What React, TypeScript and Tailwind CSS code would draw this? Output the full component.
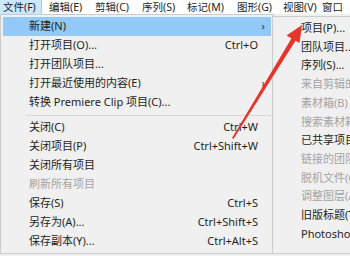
import React from 'react';

type Item = { label: string; shortcut?: string; disabled?: boolean; sub?: boolean; active?: boolean; sep?: boolean };

const menuBar = [
  { label: '文件(F)', w: 'w-[42px] mr-[4px]' },
  { label: '编辑(E)', w: 'w-[46px]' },
  { label: '剪辑(C)', w: 'w-[47px]' },
  { label: '序列(S)', w: 'w-[45px]' },
  { label: '标记(M)', w: 'w-[50px]' },
  { label: '图形(G)', w: 'w-[46px]' },
  { label: '视图(V)', w: 'w-[39px]' },
  { label: '窗口', w: 'w-[40px]' },
];

const fileItems: Item[] = [
  { label: '新建(N)', sub: true, active: true },
  { label: '打开项目(O)...', shortcut: 'Ctrl+O' },
  { label: '打开团队项目...' },
  { label: '打开最近使用的内容(E)', sub: true },
  { label: '转换 Premiere Clip 项目(C)...' },
  { label: '', sep: true },
  { label: '关闭(C)', shortcut: 'Ctrl+W' },
  { label: '关闭项目(P)', shortcut: 'Ctrl+Shift+W' },
  { label: '关闭所有项目' },
  { label: '刷新所有项目', disabled: true },
  { label: '保存(S)', shortcut: 'Ctrl+S' },
  { label: '另存为(A)...', shortcut: 'Ctrl+Shift+S' },
  { label: '保存副本(Y)...', shortcut: 'Ctrl+Alt+S' },
];

const newItems: Item[] = [
  { label: '项目(P)...' },
  { label: '团队项目...' },
  { label: '序列(S)...' },
  { label: '来自剪辑的序列', disabled: true },
  { label: '素材箱(B)', disabled: true },
  { label: '搜索素材箱', disabled: true },
  { label: '已共享项目...' },
  { label: '链接的团队项目...', disabled: true },
  { label: '脱机文件(O)...', disabled: true },
  { label: '调整图层(A)...', disabled: true },
  { label: '旧版标题(T)...' },
  { label: 'Photoshop 文件(H)...' },
];

export default function App() {
  return (
    <div
      className="relative w-[350px] h-[256px] overflow-hidden bg-[#f0f0f0] text-[11px] text-[#1e1e1e]"
      style={{ fontFamily: '"Noto Sans", "Noto Sans CJK SC", sans-serif' }}
    >
      {/* menu bar */}
      <div className="flex h-[14px] bg-white leading-none text-[10.5px]">
        {menuBar.map((m, i) => (
          <div
            key={m.label}
            className={`flex items-center shrink-0 h-[14px] pl-[3px] whitespace-nowrap ${m.w} ${i === 0 ? 'bg-[#cce8ff] border-r border-[#99d1ff]' : ''}`}
          >
            {m.label}
          </div>
        ))}
      </div>

      {/* file menu */}
      <div className="absolute left-0 top-[14px] w-[274px] h-[240px] border border-[#cccccc] bg-[#f0f0f0] px-[2px] pt-[2px]">
        {fileItems.map((it, i) =>
          it.sep ? (
            <div key={i} className="h-[6px] flex items-center pl-[23px]">
              <div className="h-px w-full bg-[#d7d7d7]" />
            </div>
          ) : (
            <div
              key={i}
              className={`h-[19px] flex items-center pl-[26px] pr-[13px] whitespace-nowrap ${it.active ? 'bg-[#91c9f7]' : ''} ${it.disabled ? 'text-[#a3a3a3]' : ''}`}
            >
              <span className="flex-1">{it.label}</span>
              {it.shortcut && <span>{it.shortcut}</span>}
              {it.sub && <span className="mr-[-7px] text-[11px] text-[#333]">&#8250;</span>}
            </div>
          )
        )}
      </div>

      {/* new submenu */}
      <div className="absolute left-[272px] top-[16px] w-[100px] h-[238px] border border-[#cccccc] bg-[#f0f0f0] pt-[2px] pl-[28px]">
        {newItems.map((it, i) => (
          <div
            key={i}
            className={`h-[18.7px] flex items-center whitespace-nowrap ${it.disabled ? 'text-[#a3a3a3]' : ''}`}
          >
            {it.label}
          </div>
        ))}
      </div>

      {/* red annotation arrow */}
      <svg className="absolute inset-0 pointer-events-none" width="350" height="256" viewBox="0 0 350 256">
        <polygon points="232,138 233.5,139 296,40 292,37.5" fill="#e8352b" />
        <polygon points="302,25 299.5,43 286.5,35.5" fill="#e8352b" />
      </svg>
    </div>
  );
}
